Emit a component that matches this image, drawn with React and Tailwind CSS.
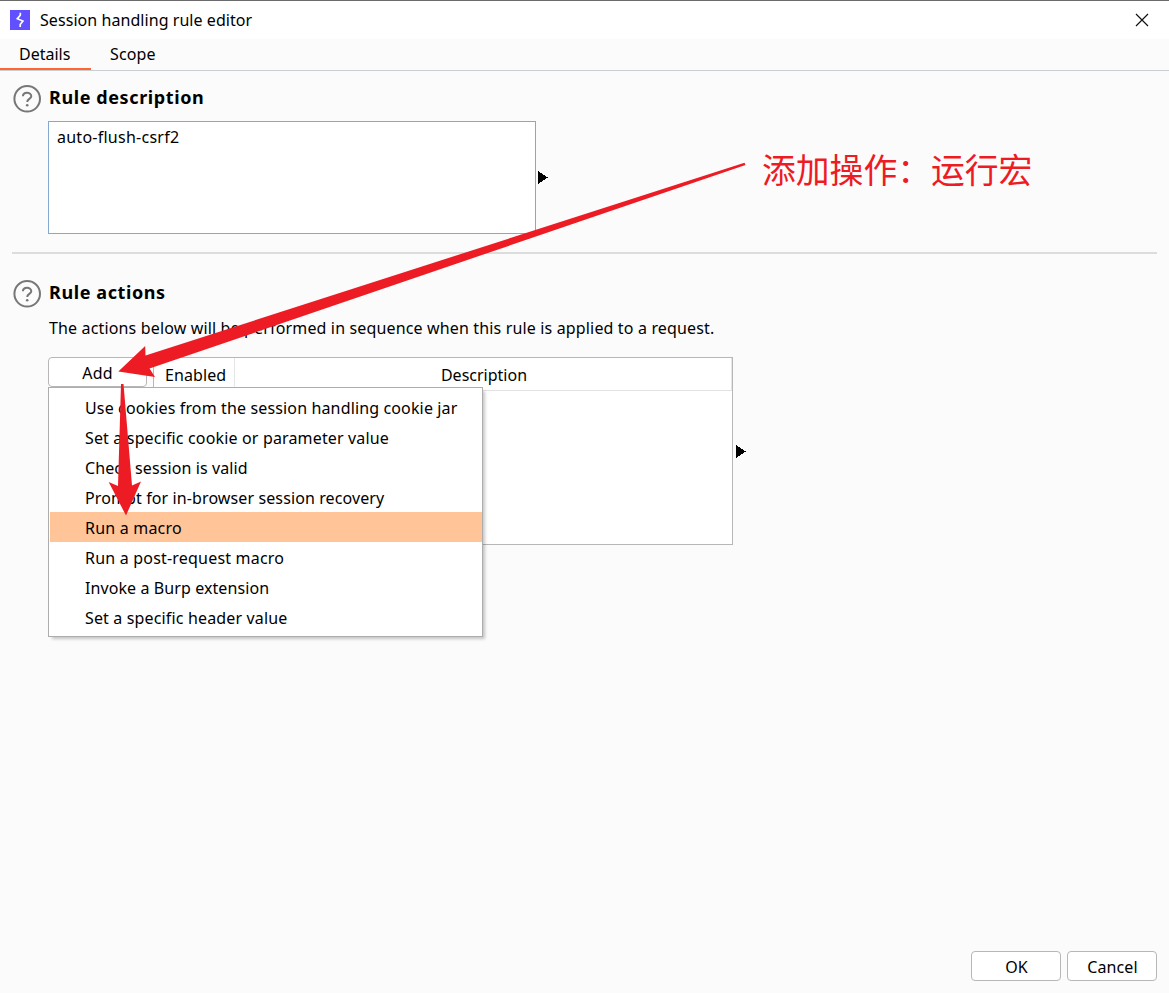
const menuItems = [
  { label: "Use cookies from the session handling cookie jar", track: "tracking-[0.14px]" },
  { label: "Set a specific cookie or parameter value", track: "tracking-[0.155px]" },
  { label: "Check session is valid", track: "tracking-[0.1px]" },
  { label: "Prompt for in-browser session recovery", track: "tracking-[0.11px]" },
  { label: "Run a macro", track: "tracking-[0.2px]", active: true },
  { label: "Run a post-request macro", track: "tracking-[0.2px]" },
  { label: "Invoke a Burp extension", track: "tracking-[0.09px]" },
  { label: "Set a specific header value", track: "tracking-[0.15px]" },
];

function HelpIcon() {
  return (
    <svg className="h-7 w-7 shrink-0" viewBox="0 0 28 28" fill="none" stroke="#777" strokeWidth="2">
      <circle cx="14.2" cy="13.800" r="12.800" />
      <path d="M9.900 11.300C10 9 11.700 7.700 14 7.700S18.300 9.200 18.300 11.200C18.300 13.900 14.200 13.900 14.200 16.900" />
      <circle cx="14.200" cy="20.200" r="1.300" fill="#777" stroke="none" />
    </svg>
  );
}

function Triangle() {
  return (
    <svg className="h-[13px] w-[10px] shrink-0" viewBox="0 0 10 13" shapeRendering="crispEdges">
      <path d="M0 0 10 6.500 0 13Z" fill="#000" />
    </svg>
  );
}

function ActionMenu() {
  return (
    <div className="absolute left-0 top-[30px] z-10 flex h-[250px] w-[435px] flex-col border border-[#adadad] bg-white pt-1 shadow-[3px_3px_3px_-1px_rgba(0,0,0,0.22)]">
      {menuItems.map((item) => (
        <div
          key={item.label}
          className={`flex h-[30px] shrink-0 items-center whitespace-nowrap pt-[2px] ${item.track} ${item.active ? "ml-px bg-[#ffc599] pl-[35px]" : "pl-9"}`}
        >
          {item.label}
        </div>
      ))}
    </div>
  );
}

export default function App() {
  return (
    <div className="relative flex h-[993px] w-[1169px] flex-col overflow-hidden bg-[#fbfbfb] font-['Noto_Sans','Noto_Sans_CJK_SC',sans-serif] text-[16px] leading-[22px] text-black">
      <header className="flex h-[39px] shrink-0 items-center border-t border-[#6b6b6b] bg-white pl-[10px] pr-5">
        <svg className="h-5 w-5" viewBox="0 0 20 20">
          <path d="M0 0H20V20H0Z" fill="#6050ff" />
          <path d="M10.300 2.800V5.200L7.300 8.700 12.900 11 10.200 14.600V17" fill="none" stroke="#fff" strokeWidth="1.700" />
        </svg>
        <h1 className="ml-[10px] flex-1 tracking-[0.06px]">Session handling rule editor</h1>
        <svg className="h-[14px] w-[14px]" viewBox="0 0 14 14" stroke="#111" strokeWidth="1.200">
          <path d="M1 1 13 13M13 1 1 13" />
        </svg>
      </header>

      <nav className="flex h-8 shrink-0 border-b border-[#c9cfd0]">
        <div className="h-[31px] w-[91px] border-b-2 border-[#ff6633] pl-[19px] pt-1">Details</div>
        <div className="pl-[19px] pt-1 tracking-[0.15px]">Scope</div>
      </nav>

      <main className="flex flex-1 flex-col px-3">
        <section className="flex h-[183px] shrink-0 flex-col border-b-2 border-[#dcdcdc] pt-[14px]">
          <div className="flex h-7 items-center pl-px">
            <HelpIcon />
            <h2 className="-mt-1 ml-2 text-[18px] font-bold tracking-[0.6px]">Rule description</h2>
          </div>
          <div className="mt-2 flex items-center pl-9">
            <div className="h-[113px] w-[488px] border border-[#84a9d1] bg-white pl-2 pt-1 tracking-[0.25px]">
              auto-flush-csrf2
            </div>
            <div className="ml-[2px]">
              <Triangle />
            </div>
          </div>
        </section>

        <section className="flex flex-col pt-[26px]">
          <div className="flex h-7 items-center pl-px">
            <HelpIcon />
            <h2 className="-mt-1 ml-2 text-[18px] font-bold tracking-[0.6px]">Rule actions</h2>
          </div>
          <p className="mt-[9px] whitespace-nowrap pl-[37px] tracking-[0.152px]">
            The actions below will be performed in sequence when this rule is applied to a request.
          </p>
          <div className="mt-[18px] flex pl-9">
            <div className="relative mr-[6px] w-[99px]">
              <button className="h-[30px] w-[99px] rounded-[4px] border border-[#b9b6b7] bg-white pt-px tracking-[0.2px]">Add</button>
              <ActionMenu />
            </div>
            <div className="h-[188px] w-[580px] border border-[#b9b6b7] bg-white">
              <div className="flex h-[33px] border-b border-[#e2e2e2]">
                <div className="w-[81px] border-r border-[#e6e6e6] pl-[11px] pt-[6px] tracking-[0.1px]">Enabled</div>
                <div className="flex-1 border-r border-[#e6e6e6] pl-[2px] pt-[6px] text-center">Description</div>
              </div>
            </div>
            <div className="ml-[3px] flex items-center">
              <Triangle />
            </div>
          </div>
        </section>

        <footer className="mb-3 mt-auto flex justify-end gap-[6px]">
          <button className="h-[30px] w-[90px] rounded-[4px] border border-[#b9b6b7] bg-white pl-px pt-[2px]">OK</button>
          <button className="h-[30px] w-[90px] rounded-[4px] border border-[#b9b6b7] bg-white pl-px pt-[2px] tracking-[0.1px]">Cancel</button>
        </footer>
      </main>

      <svg className="pointer-events-none absolute left-0 top-0 z-20 h-[993px] w-[1169px]" viewBox="0 0 1169 993" fill="#ed1c24">
        <path d="M118.300 371.500 145.200 346 145.500 355.500 744.500 162.700 745.500 165 149.500 368.500 155 377Z" />
        <path d="M121 384H123.500L132 485.500 141 481.500 126 515.500 108.700 482 118 486Z" />
      </svg>
      <div className="absolute left-[762px] top-[148px] z-20 whitespace-nowrap text-[33.8px] leading-[44px] text-[#ed1c24]">
        添加操作：运行宏
      </div>
    </div>
  );
}
